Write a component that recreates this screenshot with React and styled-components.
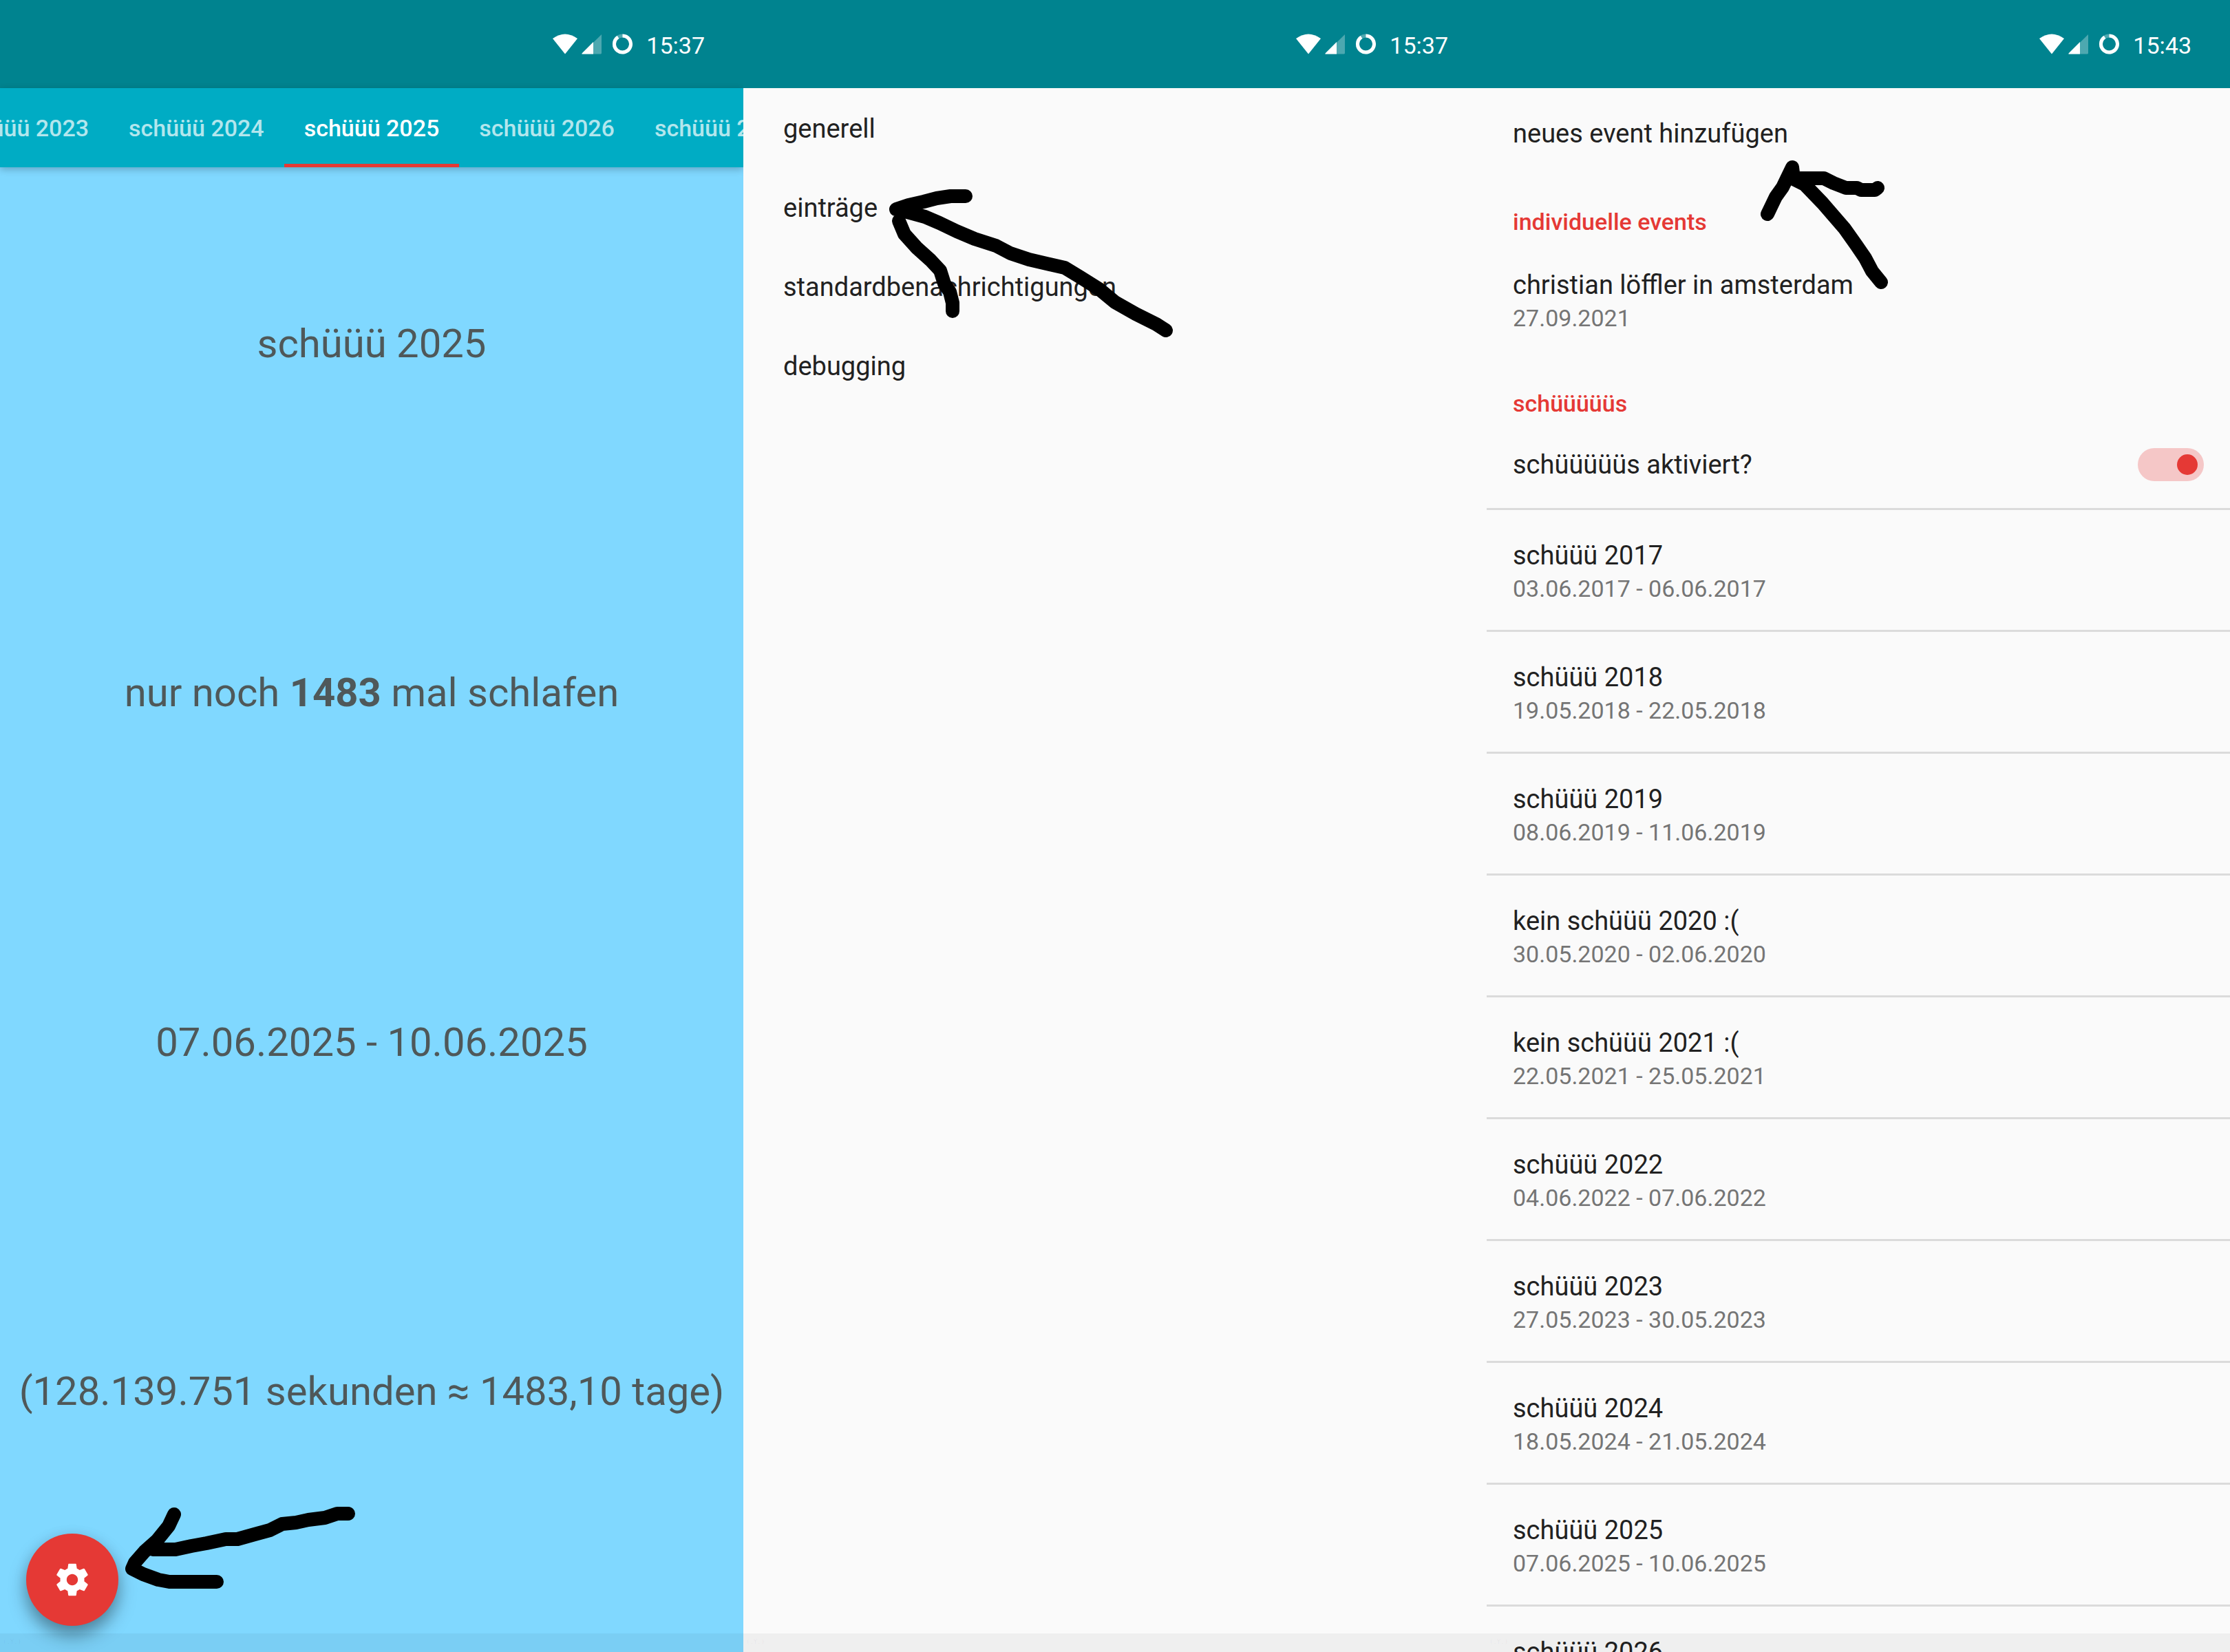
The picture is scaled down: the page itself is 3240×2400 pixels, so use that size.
import React from 'react';
import styled, { createGlobalStyle, css } from 'styled-components';

const color = {
  statusBar: '#00838f',
  toolbar: '#00acc4',
  sky: '#80d8ff',
  accent: '#e53935',
  surface: '#fafafa',
  text: '#212121',
  textSoft: '#757575',
  textBig: '#4f5859',
  divider: '#dbdbdb',
};

const GlobalStyle = createGlobalStyle`
  *, *::before, *::after { box-sizing: border-box; }
  html, body { margin: 0; height: 100%; overflow: hidden; }
  body { font-family: Roboto, "Noto Sans", sans-serif; background: ${color.surface}; }
  #root { height: 100%; }
`;

const Board = styled.main`
  position: relative;
  display: grid;
  grid-template-columns: repeat(3, minmax(0, 1fr));
  height: 100vh;
  overflow: hidden;
`;

const Screen = styled.section`
  position: relative;
  display: flex;
  flex-direction: column;
  min-height: 0;
  overflow: hidden;
  background: ${(p) => (p.$sky ? color.sky : color.surface)};
`;

const StatusBar = styled.header`
  flex: none;
  display: flex;
  align-items: center;
  justify-content: flex-end;
  gap: 18px;
  height: 128px;
  padding-right: 56px;
  background: ${color.statusBar};
  color: #fff;
`;

const StatusIcons = styled.svg`
  width: 118px;
  height: 30px;
`;

const Clock = styled.time`
  padding-top: 4px;
  font-size: 34px;
  line-height: 40px;
`;

const TabBar = styled.nav`
  flex: none;
  display: flex;
  justify-content: center;
  height: 115px;
  background: ${color.toolbar};
  box-shadow: 0 3px 10px rgba(0, 0, 0, 0.24);
`;

const buttonReset = css`
  margin: 0;
  border: 0;
  background: none;
  font-family: inherit;
  cursor: pointer;
`;

const Tab = styled.button`
  ${buttonReset}
  flex: none;
  padding: 0 29px;
  border-top: 5px solid transparent;
  border-bottom: 5px solid ${(p) => (p.$active ? color.accent : 'transparent')};
  font-size: 34px;
  line-height: 40px;
  font-weight: 500;
  color: ${(p) => (p.$active ? '#fff' : '#b3e6ed')};
  white-space: nowrap;
`;

const Countdown = styled.div`
  flex: 1;
  display: grid;
  grid-template-rows: repeat(4, 1fr);
  padding: 2px 0 125px;
`;

const CountdownLine = styled.p`
  display: flex;
  align-items: center;
  justify-content: center;
  margin: 0;
  font-size: 58px;
  line-height: 68px;
  color: ${color.textBig};
  white-space: pre;
`;

const SettingsFab = styled.button`
  ${buttonReset}
  position: absolute;
  left: 38px;
  bottom: 38px;
  display: grid;
  place-items: center;
  width: 134px;
  height: 134px;
  padding: 0;
  background: ${color.accent};
  border-radius: 50%;
  box-shadow: 0 15px 26px rgba(0, 0, 0, 0.34), 0 4px 20px rgba(0, 0, 0, 0.1);

  svg {
    width: 56px;
    height: 56px;
    fill: #fff;
  }
`;

const MenuItem = styled.button`
  ${buttonReset}
  display: flex;
  align-items: center;
  width: 100%;
  height: 115px;
  padding: 2px 58px 0;
  font-size: 38px;
  line-height: 44px;
  text-align: left;
  color: ${color.text};
`;

const Preference = styled.button`
  ${buttonReset}
  flex: none;
  display: flex;
  flex-direction: column;
  align-items: flex-start;
  justify-content: center;
  width: 100%;
  height: ${(p) => (p.$single ? 130 : 174)}px;
  padding: 2px 38px 0;
  text-align: left;
`;

const PreferenceTitle = styled.span`
  font-size: 38px;
  line-height: 52px;
  color: ${color.text};
`;

const PreferenceDate = styled.span`
  font-size: 34px;
  line-height: 44px;
  color: ${color.textSoft};
`;

const Category = styled.h2`
  flex: none;
  margin: 0;
  padding: 44px 38px 6px;
  font-size: 34px;
  line-height: 40px;
  font-weight: 500;
  color: ${color.accent};
`;

const SwitchRow = styled.label`
  flex: none;
  display: flex;
  align-items: center;
  justify-content: space-between;
  height: 126px;
  padding: 0 38px;
`;

const Switch = styled.input`
  appearance: none;
  flex: none;
  display: grid;
  align-items: center;
  justify-content: end;
  width: 96px;
  height: 48px;
  margin: 0;
  padding: 0 9px;
  border-radius: 24px;
  background: #f5c7c7;

  &::before {
    content: '';
    width: 30px;
    height: 30px;
    border-radius: 50%;
    background: ${color.accent};
  }
`;

const EventList = styled.ul`
  margin: 0;
  padding: 0;
  list-style: none;
`;

const EventItem = styled.li`
  border-top: 3px solid ${color.divider};
`;

const SystemBar = styled.footer`
  position: absolute;
  left: 0;
  right: 0;
  bottom: 0;
  display: grid;
  grid-template-columns: repeat(3, minmax(0, 1fr));
  height: 27px;
  background: rgba(0, 0, 0, 0.044);
  pointer-events: none;
`;

const SystemMark = styled.span`
  padding-left: 4px;
  font-family: "DejaVu Sans Mono", monospace;
  font-size: 9px;
  line-height: 24px;
  color: rgba(0, 0, 0, 0.05);
`;

const Annotations = styled.svg`
  position: absolute;
  left: 0;
  top: 0;
  width: 100%;
  height: auto;
  fill: none;
  stroke: #000;
  stroke-width: 20;
  stroke-linecap: round;
  stroke-linejoin: round;
  pointer-events: none;
`;

const events = [
  ['schüüü 2017', '03.06.2017 - 06.06.2017'],
  ['schüüü 2018', '19.05.2018 - 22.05.2018'],
  ['schüüü 2019', '08.06.2019 - 11.06.2019'],
  ['kein schüüü 2020 :(', '30.05.2020 - 02.06.2020'],
  ['kein schüüü 2021 :(', '22.05.2021 - 25.05.2021'],
  ['schüüü 2022', '04.06.2022 - 07.06.2022'],
  ['schüüü 2023', '27.05.2023 - 30.05.2023'],
  ['schüüü 2024', '18.05.2024 - 21.05.2024'],
  ['schüüü 2025', '07.06.2025 - 10.06.2025'],
  ['schüüü 2026', '23.05.2026 - 26.05.2026'],
];

const tabs = [2023, 2024, 2025, 2026, 2027];

const menu = ['generell', 'einträge', 'standardbenachrichtigungen', 'debugging'];

function Status({ time }) {
  return (
    <StatusBar>
      <StatusIcons viewBox="0 0 118 30" aria-hidden="true">
        <path d="M0 7Q18-6 36 7L18 29.500Z" fill="#fff" />
        <path d="M71 1V28.500L70 29.500H42Z" fill="#4da8b0" />
        <path d="M59 12V29.500H43.500Q41.500 29.500 43 28Z" fill="#fff" />
        <circle cx="101.500" cy="15" r="12" fill="none" stroke="#4da8b0" strokeWidth="5" />
        <path d="M101.500 3A12 12 0 1 1 95 4.900" fill="none" stroke="#fff" strokeWidth="5" />
      </StatusIcons>
      <Clock>{time}</Clock>
    </StatusBar>
  );
}

export default function App() {
  return (
    <>
      <GlobalStyle />
      <Board>
        <Screen $sky>
          <Status time="15:37" />
          <TabBar>
            {tabs.map((year) => (
              <Tab key={year} $active={year === 2025}>schüüü {year}</Tab>
            ))}
          </TabBar>
          <Countdown>
            <CountdownLine>schüüü 2025</CountdownLine>
            <CountdownLine>nur noch <b>1483</b> mal schlafen</CountdownLine>
            <CountdownLine>07.06.2025 - 10.06.2025</CountdownLine>
            <CountdownLine>(128.139.751 sekunden ≈ 1483,10 tage)</CountdownLine>
          </Countdown>
          <SettingsFab aria-label="einstellungen">
            <svg viewBox="0 0 24 24" aria-hidden="true">
              <path d="M19.430 12.980c.040-.320.070-.640.070-.980s-.030-.660-.070-.980l2.110-1.650c.190-.150.240-.420.120-.640l-2-3.460c-.120-.220-.390-.300-.610-.220l-2.490 1c-.520-.400-1.080-.730-1.690-.980l-.380-2.650C14.460 2.180 14.250 2 14 2h-4c-.250 0-.460.180-.490.420l-.380 2.650c-.610.250-1.170.590-1.690.980l-2.490-1c-.230-.090-.490 0-.610.220l-2 3.460c-.130.220-.070.490.120.640l2.110 1.650c-.040.320-.070.650-.070.980s.030.660.070.980l-2.110 1.650c-.190.150-.240.420-.120.640l2 3.460c.120.220.390.300.610.220l2.490-1c.520.400 1.080.730 1.690.980l.380 2.650c.030.240.240.420.490.420h4c.250 0 .460-.180.490-.420l.380-2.650c.610-.250 1.170-.590 1.690-.980l2.490 1c.230.090.490 0 .610-.220l2-3.460c.120-.220.070-.490-.120-.640l-2.110-1.650zM12 15.500c-1.930 0-3.500-1.570-3.500-3.500s1.570-3.500 3.500-3.500 3.500 1.570 3.500 3.500-1.570 3.500-3.500 3.500z" />
            </svg>
          </SettingsFab>
        </Screen>

        <Screen>
          <Status time="15:37" />
          {menu.map((entry) => (
            <MenuItem key={entry}>{entry}</MenuItem>
          ))}
        </Screen>

        <Screen>
          <Status time="15:43" />
          <Preference $single>
            <PreferenceTitle>neues event hinzufügen</PreferenceTitle>
          </Preference>
          <Category>individuelle events</Category>
          <Preference>
            <PreferenceTitle>christian löffler in amsterdam</PreferenceTitle>
            <PreferenceDate>27.09.2021</PreferenceDate>
          </Preference>
          <Category>schüüüüüs</Category>
          <SwitchRow>
            <PreferenceTitle>schüüüüüs aktiviert?</PreferenceTitle>
            <Switch type="checkbox" role="switch" defaultChecked />
          </SwitchRow>
          <EventList>
            {events.map(([title, date]) => (
              <EventItem key={title}>
                <Preference>
                  <PreferenceTitle>{title}</PreferenceTitle>
                  <PreferenceDate>{date}</PreferenceDate>
                </Preference>
              </EventItem>
            ))}
          </EventList>
        </Screen>

        <SystemBar aria-hidden="true">
          <SystemMark>(.Y.)</SystemMark>
          <SystemMark>(.Y.)</SystemMark>
          <SystemMark>(.Y.)</SystemMark>
        </SystemBar>

        <Annotations viewBox="0 0 3240 2400" aria-hidden="true">
          <path d="M506 2199H490L472 2205L448 2208L430 2212L410 2214L392 2223L370 2229L345 2236H328L300 2242L278 2246L255 2251H222" />
          <path d="M253 2200L245 2217L228 2238L210 2254L196 2270L192 2279L208 2287L230 2295L246 2298H315" />
          <path d="M1403 285H1381L1361 288L1342 293L1320 298L1302 304L1322 309L1344 315L1365 324L1390 336L1416 347L1447 357L1468 368L1495 377L1525 384L1547 389L1570 403L1597 420L1620 439L1650 456L1680 471L1694 480" />
          <path d="M1306 321L1314 340L1332 360L1352 378L1366 393L1372 412L1380 424L1384 440V452" />
          <path d="M2568 311L2580 286L2590 272L2604 243L2606 259H2650L2664 266L2682 273H2698L2704 276H2724L2728 273" />
          <path d="M2604 259L2622 268L2648 295L2680 332L2697 356L2710 375L2720 394L2733 410" />
        </Annotations>
      </Board>
    </>
  );
}
